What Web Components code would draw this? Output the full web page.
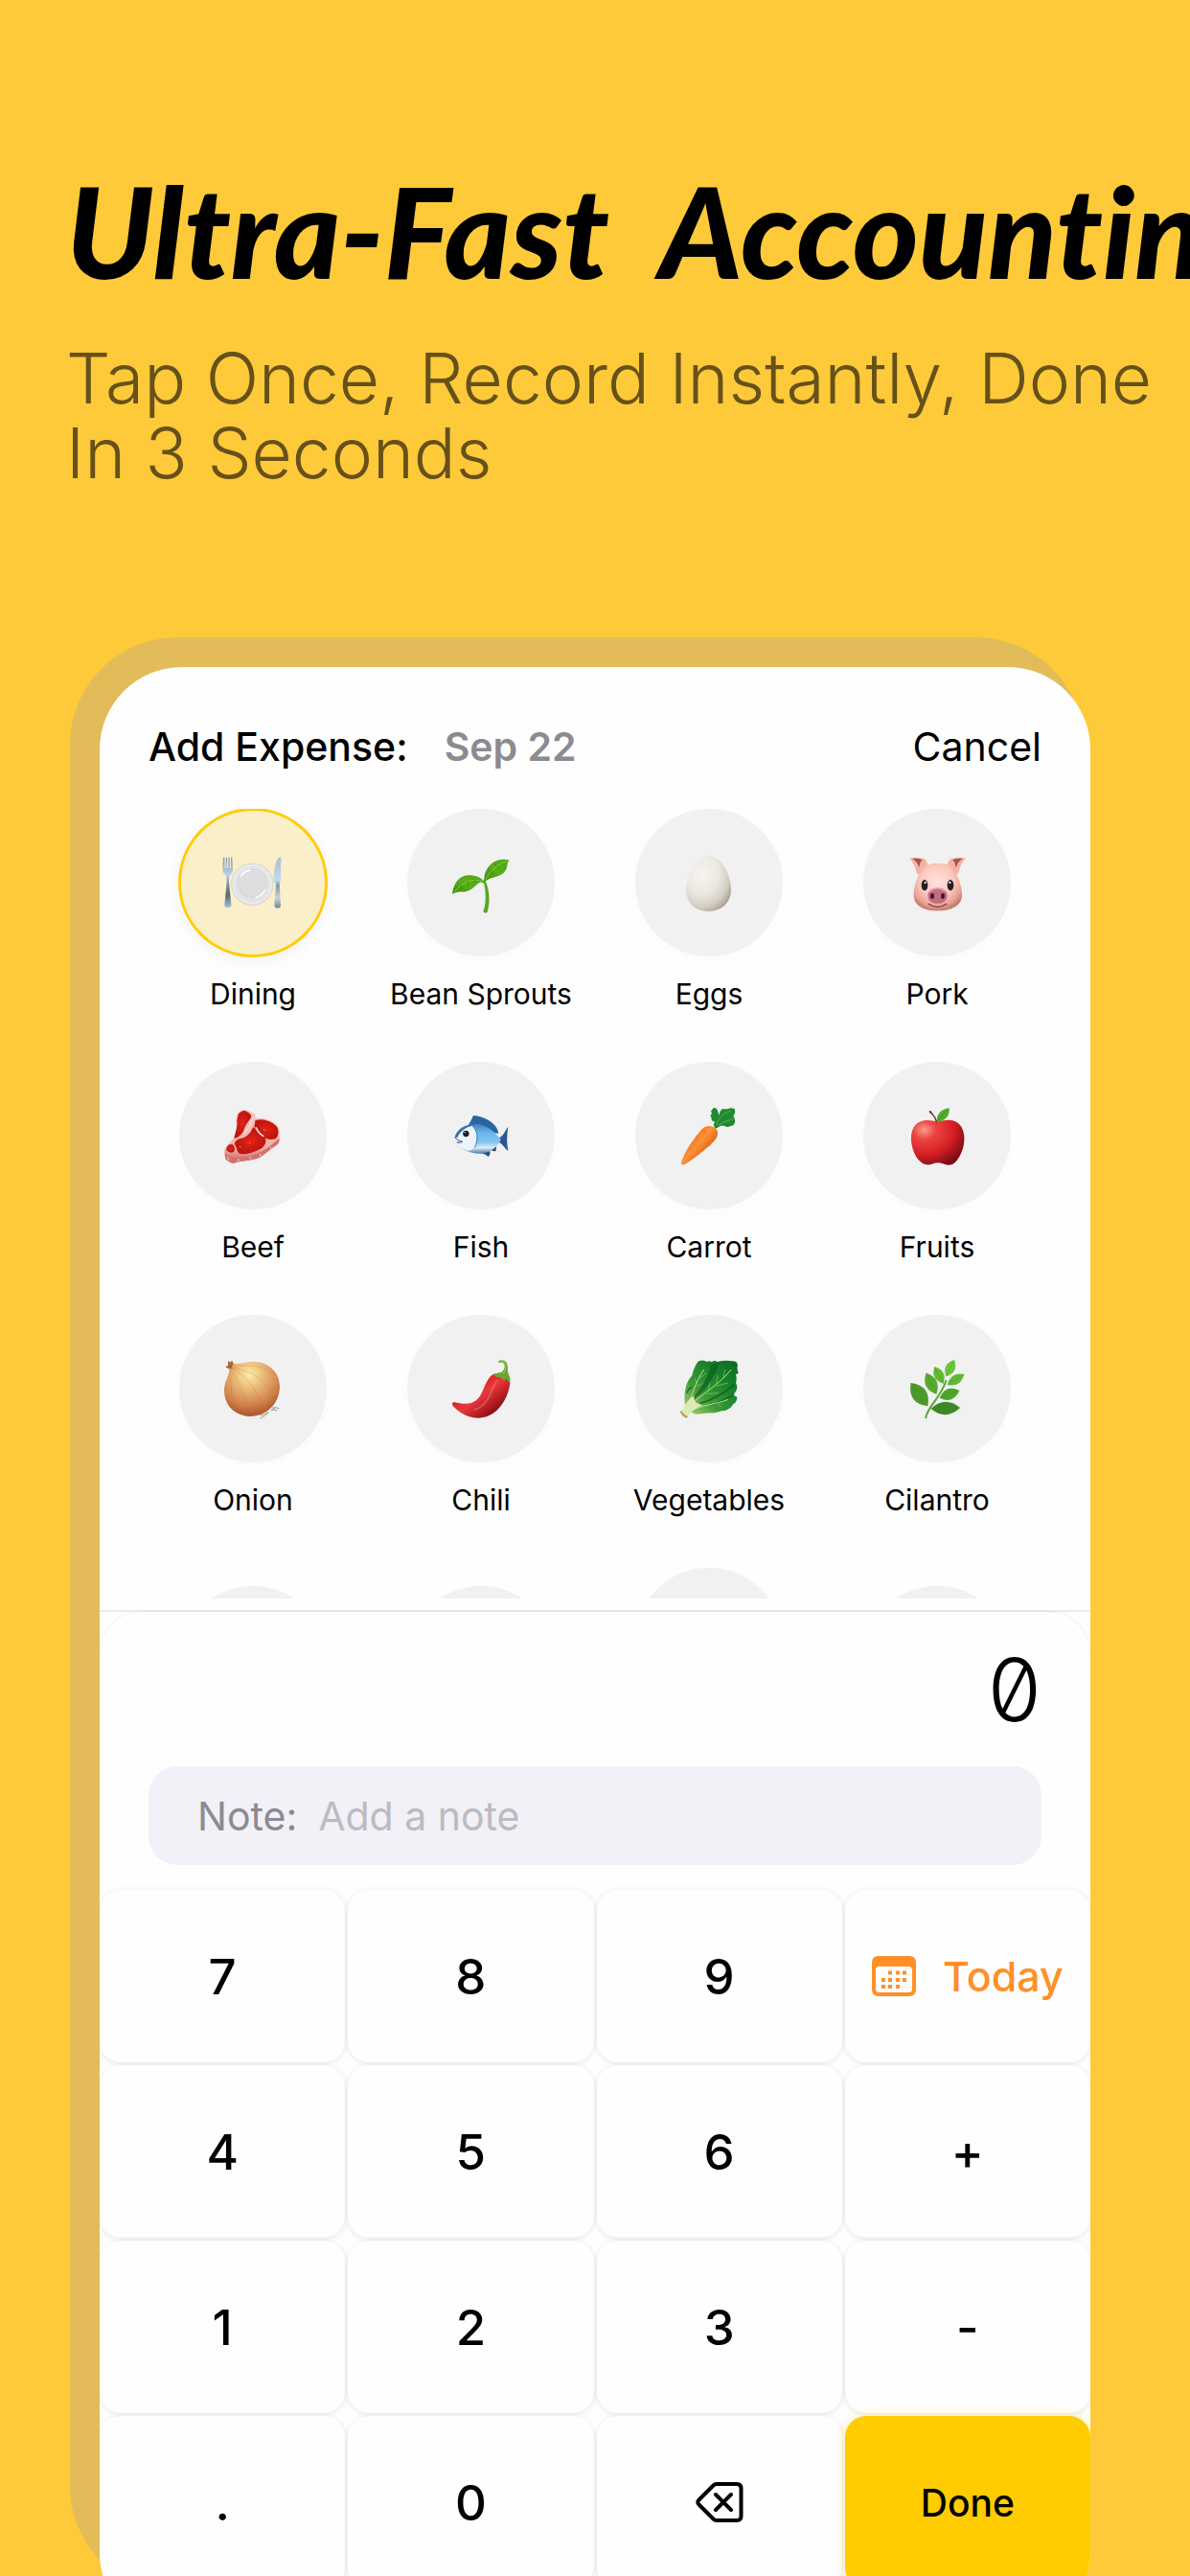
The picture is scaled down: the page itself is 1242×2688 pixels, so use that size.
<!DOCTYPE html>
<html lang="en">
<head>
<meta charset="utf-8">
<meta name="viewport" content="width=device-width, initial-scale=1">
<title>Ultra-Fast Accounting</title>
<style>
  body { margin: 0; background: #ffca39; font-family: Inter, "Liberation Sans", sans-serif; color: #000; }
</style>
</head>
<body>
<promo-page>
  <promo-hero slot="hero">
    <span slot="title">Ultra-Fast  Accounting</span>
    <span slot="subtitle">Tap Once, Record Instantly, Done In 3 Seconds</span>
  </promo-hero>
  <phone-frame>
    <sheet-header date="Sep 22" action="Cancel">Add Expense:</sheet-header>
    <category-grid>
      <category-item icon="dining" selected>Dining</category-item>
      <category-item icon="sprout">Bean Sprouts</category-item>
      <category-item icon="egg">Eggs</category-item>
      <category-item icon="pig">Pork</category-item>
      <category-item icon="beef">Beef</category-item>
      <category-item icon="fish">Fish</category-item>
      <category-item icon="carrot">Carrot</category-item>
      <category-item icon="apple">Fruits</category-item>
      <category-item icon="onion">Onion</category-item>
      <category-item icon="chili">Chili</category-item>
      <category-item icon="lettuce">Vegetables</category-item>
      <category-item icon="herb">Cilantro</category-item>
      <category-item></category-item>
      <category-item></category-item>
      <category-item tall></category-item>
      <category-item></category-item>
    </category-grid>
    <entry-panel>
      <amount-display>0</amount-display>
      <note-field label="Note:" placeholder="Add a note"></note-field>
      <key-pad>
        <pad-key>7</pad-key><pad-key>8</pad-key><pad-key>9</pad-key><pad-key icon="calendar" kind="date">Today</pad-key>
        <pad-key>4</pad-key><pad-key>5</pad-key><pad-key>6</pad-key><pad-key>+</pad-key>
        <pad-key>1</pad-key><pad-key>2</pad-key><pad-key>3</pad-key><pad-key>-</pad-key>
        <pad-key>.</pad-key><pad-key>0</pad-key><pad-key icon="erase" kind="icon"></pad-key><pad-key kind="done">Done</pad-key>
      </key-pad>
    </entry-panel>
  </phone-frame>
</promo-page>

<script>
const leaf = (x1, y1, x2, y2, k, fill) => {
  const mx = (x1 + x2) / 2, my = (y1 + y2) / 2, dx = (x2 - x1) * k, dy = (y2 - y1) * k;
  return `<path d="M${x1} ${y1}Q${mx - dy} ${my + dx} ${x2} ${y2}Q${mx + dy} ${my - dx} ${x1} ${y1}Z" fill="${fill}"/><path d="M${x1} ${y1}L${x2} ${y2}" stroke="#3d8f1c" stroke-width="2" opacity=".5"/>`;
};

const FOOD = {
  dining: `
    <defs><linearGradient id="m" x1="0" y1="0" x2="0" y2="1"><stop offset="0" stop-color="#8b97a3"/><stop offset=".35" stop-color="#b9d3ec"/><stop offset=".5" stop-color="#8796a5"/><stop offset=".75" stop-color="#5e6872"/><stop offset="1" stop-color="#a9c3dc"/></linearGradient>
    <linearGradient id="k" x1="0" y1="0" x2="0" y2="1"><stop offset="0" stop-color="#aebfce"/><stop offset=".45" stop-color="#c3daf0"/><stop offset=".55" stop-color="#8798a8"/><stop offset=".8" stop-color="#c4d3e0"/><stop offset="1" stop-color="#76828d"/></linearGradient>
    <radialGradient id="p"><stop offset=".6" stop-color="#d9d9da"/><stop offset=".68" stop-color="#f4f6f8"/><stop offset=".75" stop-color="#dfe1e4"/><stop offset=".94" stop-color="#ececee"/><stop offset="1" stop-color="#c4c4c6"/></radialGradient></defs>
    <path fill="url(#m)" d="M-3 11L1 11 2 45 5 45 5 11 9 11 9.500 45 12.500 45 13 11 17 11 17.500 45 20.500 45 21 11 25 11 27 48C27 60 20 66 16 70L15 88 22 160C23 172 0 172 1 160L8 88 7 70C2 66-5 60-5 48Z"/>
    <circle cx="88" cy="95" r="66" fill="url(#p)"/>
    <circle cx="88" cy="94" r="45" fill="none" stroke="#cfd4da" stroke-width="4"/>
    <path d="M52 70A44 44 0 0 1 80 51M98 137A44 44 0 0 0 127 112" fill="none" stroke="#f8fbff" stroke-width="6"/>
    <circle cx="88" cy="94" r="37" fill="#dededf"/>
    <path fill="url(#k)" d="M178 10C164 8 154 46 155 84Q157 90 162 90L157 162C157 173 178 173 177 162L173 90 177 84Z"/>`,
  sprout: `
    <defs><linearGradient id="g" x1="0" y1="1" x2="1" y2="0"><stop offset="0" stop-color="#3d8d0b"/><stop offset=".5" stop-color="#5aae1a"/><stop offset="1" stop-color="#4aa70e"/></linearGradient></defs>
    <path d="M97 84C104 110 109 145 97 181Q103 189 110 182C120 148 116 110 103 82Z" fill="#56a91d"/>
    <path d="M99 86C103 90 98 94 92 89C78 86 66 119 34 119Q12 117 0 127C4 90 23 65 57 67C76 68 92 76 99 86Z" fill="url(#g)"/>
    <path d="M100 87C97 42 134 8 179 20C169 28 176 39 166 53C153 74 124 70 107 83Z" fill="url(#g)"/>
    <path d="M8 118C30 90 62 74 95 86M105 80C116 54 145 30 172 22" stroke="#8acb3a" stroke-width="3" fill="none"/>
    <path d="M28 98L27 112M48 85L52 103M68 79L73 88M124 53L123 65M140 38L151 47M133 25L135 40M112 45L118 55" stroke="#347d0b" stroke-width="2"/>`,
  egg: `
    <defs><radialGradient id="e" cx=".35" cy=".32" r=".75"><stop offset="0" stop-color="#f6f4ef"/><stop offset=".5" stop-color="#ebe8e2"/><stop offset=".8" stop-color="#d3cdc3"/><stop offset="1" stop-color="#aaa296"/></radialGradient></defs>
    <path d="M88 6C130 6 159 68 159 112C159 154 128 180 88 180S18 154 18 112C18 68 46 6 88 6Z" fill="url(#e)"/>`,
  pig: `
    <defs><radialGradient id="f" cx=".48" cy=".38" r=".62"><stop offset="0" stop-color="#ffe3dc"/><stop offset=".55" stop-color="#fbc8bd"/><stop offset=".85" stop-color="#e8a194"/><stop offset="1" stop-color="#c6796d"/></radialGradient></defs>
    <path d="M3 14Q30 8 51 16Q61 24 59 36L35 66C28 65 25 58 22 46Q17 26 3 14Z" fill="#f3b2a5"/>
    <path d="M180 14Q153 8 132 16Q122 24 124 36L148 66C155 65 158 58 161 46Q166 26 180 14Z" fill="#f3b2a5"/>
    <path d="M13 15Q32 12 45 19C36 25 36 34 34 43Q28 24 13 15ZM170 15Q151 12 138 19C147 25 147 34 149 43Q155 24 170 15Z" fill="#a2564b"/>
    <path d="M92 30C120 30 139 37 147 57C157 78 168 100 168 128C168 162 135 178 92 178S17 162 17 128C17 100 27 78 37 57C45 37 64 30 92 30Z" fill="url(#f)"/>
    <ellipse cx="51" cy="98" rx="10" ry="17" fill="#222022"/><ellipse cx="132" cy="98" rx="10" ry="17" fill="#222022"/>
    <circle cx="53" cy="90" r="3.500" fill="#e6e6e6"/><circle cx="130" cy="90" r="3.500" fill="#e6e6e6"/>
    <rect x="61" y="107" width="61" height="48" rx="24" fill="#c16b85"/><path d="M67 118Q91 98 116 118" stroke="#e49cae" stroke-width="5" fill="none"/>
    <ellipse cx="75" cy="132" rx="6" ry="9" fill="#4d1523"/><ellipse cx="108" cy="132" rx="6" ry="9" fill="#4d1523"/>
    <path d="M62 156Q91 176 121 156" fill="none" stroke="#7d3d35" stroke-width="4"/>`,
  beef: `
    <defs><linearGradient id="b" x1="0" y1="0" x2="0" y2="1"><stop offset="0" stop-color="#f7c4bc"/><stop offset=".7" stop-color="#f3b1aa"/><stop offset="1" stop-color="#c4635f"/></linearGradient>
    <radialGradient id="r"><stop offset="0" stop-color="#e3231a"/><stop offset="1" stop-color="#bd150e"/></radialGradient></defs>
    <path d="M41 22Q54 6 72 10L98 24 97 36C130 32 155 45 168 62C176 72 171 82 173 98Q173 116 160 122L112 158C80 170 50 168 28 177Q5 170 3 158L1 134C10 115 30 104 37 84C42 66 35 48 38 34Z" fill="url(#b)"/>
    <path d="M2 142C20 166 60 158 86 152C120 144 148 118 173 98Q173 116 160 122L112 158C80 170 50 168 28 177Q5 170 3 158Z" fill="#d4706b"/>
    <path d="M12 156L14 168M45 162L43 172M80 156L82 164M112 147L114 156M145 124L146 132" stroke="#f0b3ab" stroke-width="4"/>
    <g stroke="#c3180f" stroke-width="4" stroke-linejoin="round">
    <path d="M46 24Q58 10 68 15C82 22 86 30 80 36C70 50 62 58 58 76Q46 94 33 96C38 76 46 60 42 44Z" fill="url(#r)"/>
    <path d="M99 44C120 38 150 46 165 66Q172 88 160 98C140 104 128 98 116 84Q100 76 96 60Z" fill="url(#r)"/>
    <path d="M91 66Q105 78 118 92C132 98 132 114 116 128C90 142 64 148 50 145C38 140 44 126 34 116C36 104 50 100 64 98Q84 86 91 66Z" fill="url(#r)"/>
    <path d="M9 134C9 122 20 116 27 121Q34 132 28 140Q16 144 9 134Z" fill="url(#r)"/></g>
    <path d="M90 32Q82 64 60 84M99 64Q108 84 124 92" stroke="#fbd8d1" stroke-width="5" fill="none"/>
    <circle cx="50" cy="125" r="2" fill="#f6a097"/><circle cx="125" cy="72" r="2" fill="#f6a097"/><circle cx="80" cy="112" r="2" fill="#f6a097"/>`,
  fish: `
    <defs><linearGradient id="s" x1="0" y1="0" x2="0" y2="1"><stop offset="0" stop-color="#3c82c4"/><stop offset=".3" stop-color="#6cb6ea"/><stop offset=".62" stop-color="#83c6f0"/><stop offset=".8" stop-color="#dcecf6"/><stop offset="1" stop-color="#4d7aa6"/></linearGradient></defs>
    <path d="M48 60Q58 48 66 27C100 30 142 50 145 84Z" fill="#2b64a3"/>
    <path d="M145 98C160 92 166 74 175 62Q168 102 175 139C164 128 158 116 145 110Z" fill="#2a5590"/>
    <path d="M84 144Q105 146 113 157Q120 150 118 138ZM122 136Q130 140 137 138L138 122Z" fill="#2d4f80"/>
    <path d="M8 96C12 68 42 52 78 54C112 58 132 78 153 103C140 126 118 147 84 146C54 146 24 132 14 114C18 112 30 114 32 110Q20 106 8 96Z" fill="url(#s)"/>
    <path d="M8 96C14 76 40 60 64 60C80 76 80 104 68 129Q58 138 50 137C34 133 20 124 14 114C18 112 30 114 32 110Q20 106 8 96Z" fill="#eef3f7"/>
    <path d="M8 95C14 72 42 54 76 56Q44 60 28 78Q20 86 16 96Z" fill="#3a6fae"/>
    <path d="M64 62C82 76 82 104 70 128" fill="none" stroke="#3d80bd" stroke-width="3"/>
    <circle cx="43" cy="84" r="9.500" fill="#191a1c"/><circle cx="40" cy="80" r="2" fill="#fff"/>
    <path d="M8 96Q20 108 32 109Q26 114 14 111" fill="none" stroke="#24579b" stroke-width="3"/>`,
  carrot: `
    <defs><linearGradient id="c" x1=".25" y1=".3" x2=".75" y2=".75"><stop offset="0" stop-color="#f6731c"/><stop offset=".4" stop-color="#fb923a"/><stop offset="1" stop-color="#db560d"/></linearGradient></defs>
    <path d="M108 68Q112 50 128 35M112 66Q130 50 150 50" stroke="#3d7d3b" stroke-width="5" fill="none"/>
    <path d="M103 4Q112 0 116 10Q120 20 122 28Q122 14 132 6Q140 8 150 6Q158 2 170 6Q174 20 166 28Q172 36 171 48Q168 60 156 60Q148 66 140 60L122 58 112 66 104 58 108 46Q96 44 98 36L94 26Q102 22 96 14Z" fill="#1f8b31"/>
    <path d="M112 56Q122 24 158 12M116 58Q140 44 166 38" stroke="#4ab83f" stroke-width="3" fill="none"/>
    <path d="M5 181Q1 178 5 168C18 132 48 92 66 72C78 56 100 56 113 70C121 80 118 96 105 108C80 132 40 166 12 181Z" fill="url(#c)"/>
    <path d="M70 74L82 84M48 98L58 106M88 116L96 122M30 128L38 134" stroke="#d75f12" stroke-width="2"/>`,
  apple: `
    <defs><radialGradient id="a" cx=".25" cy=".22" r=".85"><stop offset="0" stop-color="#fb9d8e"/><stop offset=".25" stop-color="#ec4440"/><stop offset=".65" stop-color="#d51f26"/><stop offset="1" stop-color="#7e0d12"/></radialGradient></defs>
    <path d="M92 48C112 38 150 36 166 62C184 92 174 140 152 168C136 188 118 182 106 177Q92 172 80 177C64 184 48 184 32 166C10 138 0 90 18 62C36 36 72 40 92 48Z" fill="url(#a)"/>
    <path d="M64 15Q70 8 74 17Q86 30 92 49L86 48Q82 30 70 21Z" fill="#5d3a2a"/>
    <path d="M90 48C86 24 104 6 128 4C130 26 120 44 90 48Z" fill="#4fae2c"/><path d="M92 46Q104 26 124 8" stroke="#317f18" stroke-width="2"/>`,
  onion: `
    <defs><radialGradient id="o" cx=".45" cy=".25" r=".8"><stop offset="0" stop-color="#fceba9"/><stop offset=".3" stop-color="#edbe7b"/><stop offset=".7" stop-color="#cf7f4a"/><stop offset="1" stop-color="#9b4a22"/></radialGradient></defs>
    <path d="M150 150Q162 148 172 152M146 156Q156 156 166 158M140 162Q130 176 112 184M136 164Q126 172 112 174M148 158L160 150" stroke="#a39a84" stroke-width="3" fill="none"/>
    <path d="M12 4L20 8 24 2 28 10C36 16 56 8 82 6C136 2 174 36 174 84C172 138 134 176 80 177C30 174 0 140 0 96C0 66 16 50 16 30L4 22 12 18Z" fill="url(#o)"/>
    <path d="M20 26C60 40 110 90 120 166M20 26C70 26 140 60 156 130M20 26C40 60 70 120 76 176M20 26C20 70 20 120 36 160M20 26C80 10 130 20 160 50" stroke="#b8692f" stroke-width="2" fill="none" opacity=".35"/>
    <path d="M12 4L20 8 24 2 28 10 24 26 16 28 4 22 12 18Z" fill="#a56b35"/>`,
  chili: `
    <defs><linearGradient id="h" x1=".2" y1=".2" x2=".8" y2=".8"><stop offset="0" stop-color="#c9151c"/><stop offset=".5" stop-color="#e8383b"/><stop offset="1" stop-color="#8f0c12"/></linearGradient></defs>
    <path d="M130 44C112 52 104 78 94 100C80 132 56 146 6 132Q-4 134 2 144C24 168 50 182 84 182C140 180 176 122 181 72C180 52 150 36 130 44Z" fill="url(#h)"/>
    <path d="M140 66C122 84 120 140 70 156" stroke="#fb7f78" stroke-width="6" fill="none" opacity=".45" stroke-linecap="round"/>
    <path d="M145 2Q172-4 174 22Q172 34 176 44Q184 56 180 72L170 60 160 64 150 54 140 54 128 46Q140 40 156 38Q168 24 162 12Q156 6 145 9Z" fill="#6aa636"/>
    <path d="M150 5Q168 4 168 22Q166 34 160 44" stroke="#9ccb5b" stroke-width="3" fill="none"/>`,
  lettuce: `
    <defs><linearGradient id="l" x1="0" y1="1" x2="1" y2="0"><stop offset="0" stop-color="#b5d479"/><stop offset=".35" stop-color="#3c9a36"/><stop offset=".7" stop-color="#14802c"/><stop offset="1" stop-color="#0c6a22"/></linearGradient></defs>
    <path d="M15 140C10 110 16 70 36 50Q48 10 58 4Q72-2 84 6Q90 2 98 6L108 2 116 6Q140 0 166 4Q184 6 178 26L182 42 174 46Q178 60 174 72Q182 86 174 98L166 110 178 116Q178 132 166 138Q156 158 130 160Q110 168 92 166L50 170 22 160Z" fill="url(#l)"/>
    <path d="M96 14Q90 48 64 88L30 132Q66 110 90 76Q112 40 122 10Z" fill="#0e5b1f" opacity=".65"/>
    <path d="M94 140Q140 130 168 106M62 136Q120 120 170 76M20 104Q24 92 36 84" stroke="#0a571c" stroke-width="5" fill="none" opacity=".7"/>
    <path d="M18 156C50 116 110 90 160 30M16 152C36 120 46 70 74 30M26 162C70 140 110 140 150 124" stroke="#b9e08a" stroke-width="3" fill="none"/>
    <path d="M88 98L92 70M112 80L118 48M134 60L140 30M82 106L120 104M112 82L150 72M52 78L46 58M60 58L82 40M50 84L70 74M96 142L110 128M118 138L128 146" stroke="#8ccc68" stroke-width="2" fill="none"/>
    <path d="M0 162L12 150C20 130 30 120 44 112C38 130 56 140 70 142C50 150 36 160 22 180Z" fill="#dcebb4"/>
    <path d="M0 162Q2 176 20 182L24 177Q8 170 4 158Z" fill="#b79a6e"/>`,
  herb: `
    <path d="M55 181C58 150 100 120 118 66" stroke="#5aa530" stroke-width="6" fill="none" stroke-linecap="round"/>
    ${leaf(8, 72, 61, 145, .52, '#4a9a2b')}${leaf(56, 41, 88, 107, .5, '#54ab2d')}${leaf(82, 22, 110, 74, .52, '#62ba33')}${leaf(144, 0, 118, 52, .52, '#6cc53a')}${leaf(175, 45, 122, 78, .48, '#62b836')}${leaf(160, 96, 98, 119, .52, '#4ea42c')}${leaf(162, 150, 71, 153, .44, '#3c8826')}`
};

const GLYPH = {
  calendar: `<svg width="46" height="42" viewBox="0 0 46 42" aria-hidden="true"><path fill="currentColor" fill-rule="evenodd" d="M7 0H39Q46 0 46 7V35Q46 42 39 42H7Q0 42 0 35V7Q0 0 7 0ZM7.500 11Q4 11 4 14.500V34.500Q4 38 7.500 38H38.500Q42 38 42 34.500V14.500Q42 11 38.500 11Z"/><path fill="currentColor" d="M17 15.500h4v4h-4zM25 15.500h4v4h-4zM32 15.500h4v4h-4zM10 23h4v4h-4zM17 23h4v4h-4zM25 23h4v4h-4zM32 23h4v4h-4zM10 30h4v4h-4zM17 30h4v4h-4zM25 30h4v4h-4z"/></svg>`,
  erase: `<svg width="50" height="42" viewBox="0 0 50 42" aria-hidden="true" fill="none" stroke="currentColor" stroke-linejoin="round" stroke-linecap="round"><path stroke-width="4" d="M22 2H43Q47.500 2 47.500 6.500V35.500Q47.500 40 43 40H22Q20 40 18.500 38.500L3.500 23.500Q1 21 3.500 18.500L18.500 3.500Q20 2 22 2Z"/><path stroke-width="4" d="M21 13L37 29M37 13L21 29"/></svg>`
};

const define = (name, render) => customElements.define(name, class extends HTMLElement {
  constructor() {
    super();
    this.attachShadow({ mode: 'open' }).innerHTML = `<style>
      *{box-sizing:border-box}
      button{font:inherit;color:inherit;background:none;border:0;padding:0;margin:0;cursor:pointer}
      svg{display:block;overflow:visible}
    </style>` + render(this);
  }
});

define('promo-page', () => `
  <style>
    :host { display: block; height: 100vh; overflow: hidden; background: #ffca39; }
    .plate { display: flow-root; margin: 153px 111px 0 73px; padding: 31px 0 0 31px; border-radius: 112px; background: #e2bc58; }
    ::slotted(phone-frame) { margin: 0 -7px -43px 0; }
  </style>
  <slot name="hero"></slot>
  <main class="plate"><slot></slot></main>`);

define('promo-hero', () => `
  <style>
    :host { display: block; padding: 165px 0 0 69px; }
    h1, p { margin: 0; font-weight: inherit; }
    h1 { font: italic 900 132px/150px Lato, "Open Sans", sans-serif; white-space: pre; font-variant-ligatures: none; }
    p { margin-top: 41px; padding-right: 16px; font: 300 73px/78px Inter, sans-serif; color: #66511a; }
  </style>
  <h1><slot name="title"></slot></h1>
  <p><slot name="subtitle"></slot></p>`);

define('phone-frame', () => `
  <style>
    :host { display: block; padding: 58px 0 48px; border-radius: 86px; background: #fefefe; overflow: hidden; }
  </style>
  <slot></slot>`);

define('sheet-header', el => `
  <style>
    :host { display: flex; align-items: baseline; padding: 0 51px; font-size: 41px; line-height: 50px; }
    h2 { margin: 0 38px 0 0; font: inherit; font-weight: 500; }
    .date { font-weight: 600; color: #8b8b90; }
    .action { margin-left: auto; }
  </style>
  <h2><slot></slot></h2>
  <button class="date">${el.getAttribute('date')}</button>
  <button class="action">${el.getAttribute('action')}</button>`);

define('category-grid', () => `
  <style>
    :host { display: grid; grid-template-columns: repeat(4, 1fr); align-items: center; row-gap: 52px;
            height: 824px; margin-top: 40px; padding: 0 41px; box-sizing: border-box; overflow: hidden; }
  </style>
  <slot></slot>`);

define('category-item', el => {
  const icon = el.getAttribute('icon');
  return `
  <style>
    :host { display: block; }
    button { display: flex; flex-direction: column; align-items: center; gap: 20px; width: 100%; font-size: 30px; line-height: 38px; white-space: nowrap; }
    .disc { display: grid; place-items: center; width: 154px; height: 154px; border-radius: 50%; background: #f1f1f1; box-shadow: 0 3px 14px rgba(0,0,0,.015); }
    .label { min-height: 38px; }
    :host([tall]) .label { min-height: 76px; }
    :host([selected]) .disc { background: #faefc9; border: 2px solid #ffcc00; box-shadow: 0 0 0 1px #ffcc00, 0 4px 18px rgba(0,0,0,.06); }
  </style>
  <button ${el.hasAttribute('selected') ? 'aria-pressed="true"' : ''}>
    <span class="disc">${icon ? `<svg width="60" height="60" viewBox="0 0 180 180" fill="none" aria-hidden="true">${FOOD[icon]}</svg>` : ''}</span>
    <span class="label"><slot></slot></span>
  </button>`;
});

define('entry-panel', () => `
  <style>
    :host { display: block; margin-top: 12px; border-top: 2px solid #ebebeb; }
    section { padding-top: 31px; border-radius: 44px 44px 0 0; box-shadow: 0 0 2px rgba(0,0,0,.14); }
  </style>
  <section><slot></slot></section>`);

define('amount-display', () => `
  <style>
    :host { display: block; padding: 0 51px; }
    output { display: block; text-align: right; font: 300 91px/100px Inter, sans-serif; font-feature-settings: "zero"; }
  </style>
  <output><slot></slot></output>`);

define('note-field', el => `
  <style>
    :host { display: flex; align-items: center; gap: 22px; height: 103px; margin: 30px 51px 0; padding: 0 51px;
            border-radius: 30px; background: #f2f1f7; font-size: 41px; box-sizing: border-box; }
    label { color: #8b8b90; }
    input { flex: 1; min-width: 0; padding: 0; border: 0; outline: 0; background: none; font: inherit; color: #000; }
    input::placeholder { color: #bcbbc1; opacity: 1; }
  </style>
  <label for="note">${el.getAttribute('label')}</label>
  <input id="note" type="text" placeholder="${el.getAttribute('placeholder')}">`);

define('key-pad', () => `
  <style>
    :host { display: grid; grid-template-columns: repeat(4, 1fr); grid-auto-rows: 180px; gap: 3px; margin-top: 26px; }
  </style>
  <slot></slot>`);

define('pad-key', el => {
  const icon = el.getAttribute('icon');
  return `
  <style>
    :host { display: block; border-radius: 22px; background: #fefefe; box-shadow: 0 1px 6px rgba(0,0,0,.1); }
    button { display: flex; align-items: center; justify-content: center; gap: 28px; width: 100%; height: 100%; font-size: 51px; font-weight: 500; }
    :host([kind=date]) button { font-size: 43px; color: #ff9028; }
    :host([kind=done]) button { font-size: 39px; }
    :host([kind=done]) { background: #ffcc00; box-shadow: 0 0 14px rgba(255,204,0,.3); }
  </style>
  <button ${icon === 'erase' ? 'aria-label="Delete"' : ''}>${icon ? GLYPH[icon] : ''}<slot></slot></button>`;
});
</script>
</body>
</html>
